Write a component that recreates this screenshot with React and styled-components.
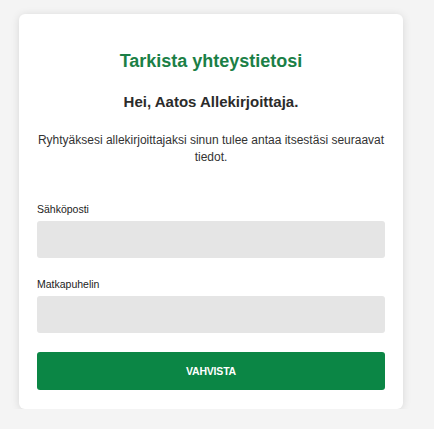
import React from 'react'
import styled, { createGlobalStyle } from 'styled-components'

const GlobalStyle = createGlobalStyle`
  html, body {
    margin: 0;
    padding: 0;
    background: #f4f4f4;
    font-family: "Liberation Sans", Arial, sans-serif;
  }
`

const Page = styled.div`
  padding: 14px 0 0 19px;
`

const Card = styled.form`
  width: 384px;
  box-sizing: border-box;
  padding: 36px 18px 19px;
  background: #fff;
  border-radius: 6px;
  box-shadow: 0 1px 8px rgba(0, 0, 0, 0.12);
`

const Title = styled.h2`
  margin: 0;
  font-size: 18px;
  line-height: 22px;
  font-weight: bold;
  color: #1b7f46;
  text-align: center;
`

const Greeting = styled.h3`
  margin: 21px 0 0;
  font-size: 15px;
  line-height: 17px;
  font-weight: bold;
  color: #2b2b2b;
  text-align: center;
`

const Intro = styled.p`
  margin: 22px 0 0;
  font-size: 12px;
  line-height: 17px;
  color: #333;
  text-align: center;
`

const Field = styled.div`
  display: flex;
  flex-direction: column;
  margin-top: ${p => p.first ? '36px' : '19px'};
`

const Label = styled.label`
  font-size: 10.5px;
  line-height: 14px;
  color: #222;
  margin-bottom: 5px;
`

const Input = styled.input`
  height: 37px;
  box-sizing: border-box;
  border: none;
  border-radius: 3px;
  background: #e5e5e5;
  padding: 0 10px;
  font: inherit;
  outline: none;
`

const Button = styled.button`
  margin-top: 19px;
  width: 100%;
  height: 38px;
  border: none;
  border-radius: 3px;
  background: #0b8645;
  color: #fff;
  font-family: inherit;
  font-size: 10.5px;
  font-weight: bold;
  letter-spacing: -0.2px;
  cursor: pointer;
`

export default function App() {
  return (
    <Page>
      <GlobalStyle />
      <Card onSubmit={e => e.preventDefault()}>
        <Title>Tarkista yhteystietosi</Title>
        <Greeting>Hei, Aatos Allekirjoittaja.</Greeting>
        <Intro>Ryhtyäksesi allekirjoittajaksi sinun tulee antaa itsestäsi seuraavat tiedot.</Intro>
        <Field first>
          <Label htmlFor="email">Sähköposti</Label>
          <Input id="email" type="email" />
        </Field>
        <Field>
          <Label htmlFor="phone">Matkapuhelin</Label>
          <Input id="phone" type="tel" />
        </Field>
        <Button type="submit">VAHVISTA</Button>
      </Card>
    </Page>
  )
}
